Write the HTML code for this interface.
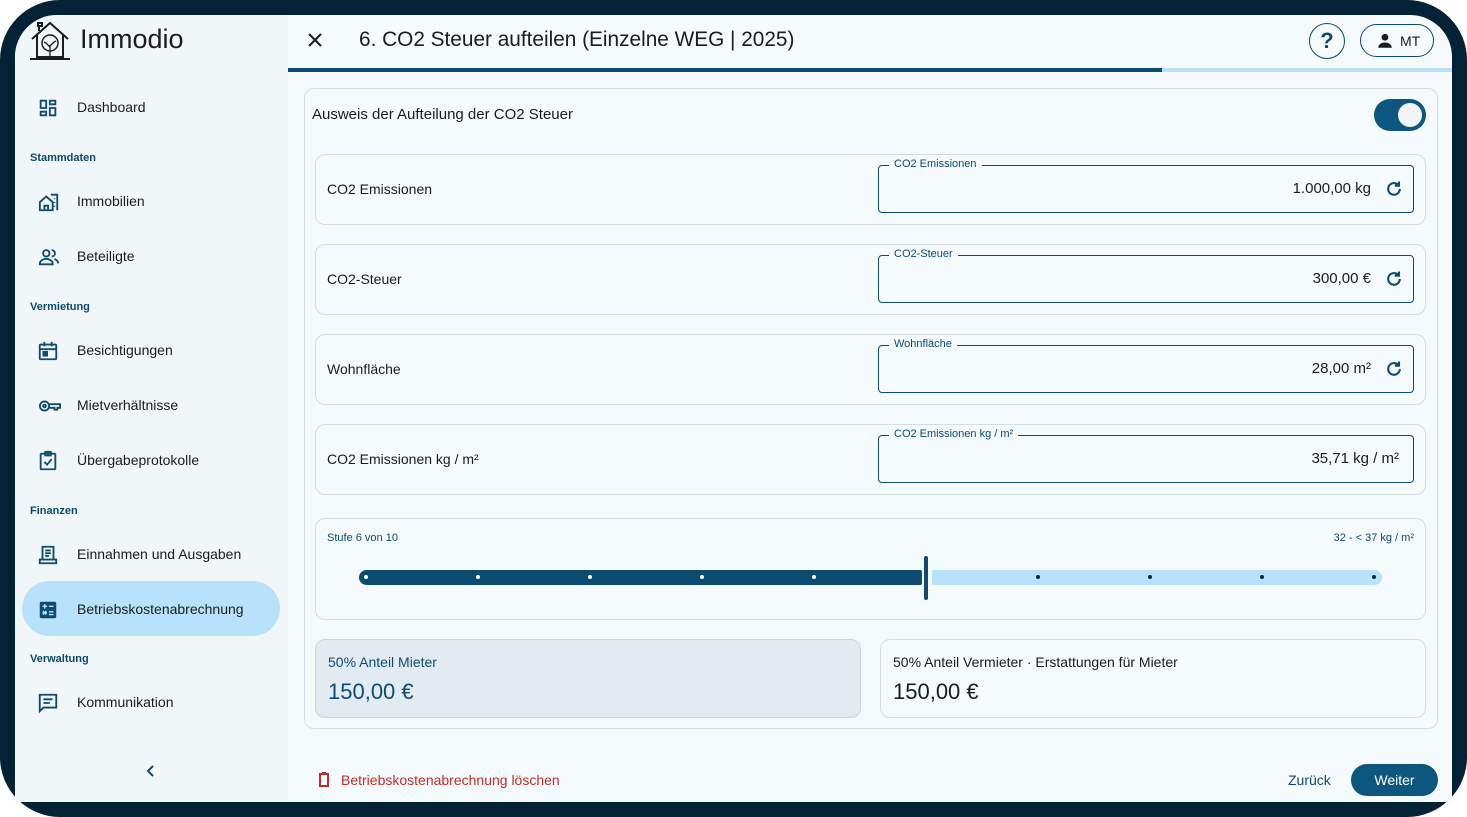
<!DOCTYPE html>
<html><head><meta charset="utf-8"><style>
*{box-sizing:border-box;margin:0;padding:0}
body{width:1467px;height:817px;background:#fff;font-family:"Liberation Sans",sans-serif;overflow:hidden;position:relative;color:#1a1c1e}
.frame{position:absolute;left:0;top:0;width:1467px;height:817px;background:#032236;border-radius:60px}
.screen{position:absolute;left:15px;top:15px;width:1437px;height:787px;background:#f5fafd;border-radius:42px 42px 0 0;overflow:hidden}
.side{position:absolute;left:0;top:0;width:273px;height:787px;background:#f1f6f9}
.abs{position:absolute}
.nav{position:absolute;left:22px;font-size:14px;color:#1a1c1e}
.nav svg{position:absolute;left:0;top:-2px}
.nav span{position:absolute;left:40px;top:0;white-space:nowrap}
.sec{position:absolute;left:15px;font-size:11px;font-weight:bold;color:#0b4a6e}
.card{position:absolute;border:1px solid #d3dde4;border-radius:10px;background:#f5fafd}
.field{position:absolute;left:562px;top:10px;width:536px;height:48px;border:1px solid #0d4c70;border-radius:4px}
.field .lb{position:absolute;left:10px;top:-8px;background:#f5fafd;padding:0 5px;font-size:11px;color:#0d4c70}
.field .v{position:absolute;right:42px;top:14px;font-size:15px}
.rowl{position:absolute;left:11px;top:26px;font-size:14px}
</style></head><body>
<div class="frame"></div>
<div class="screen">
 <div class="side">
  <svg class="abs" style="left:14px;top:4px" width="42" height="42" viewBox="0 0 42 42" fill="none" stroke="#1a1c1e" stroke-width="2"><path d="M3 20 L21 4 L39 20"/><path d="M8 16 V38 H34 V16"/><path d="M10 6 V12"/><rect x="9" y="4" width="4" height="3"/><circle cx="21" cy="24" r="8" stroke-width="1.5"/><path d="M21 38V26M21 28l-4-4M21 27l4-4M17 24l-2-1M25 23l2-1" stroke-width="1.3"/><path d="M1 40 H41"/></svg>
  <div class="abs" style="left:65px;top:9px;font-size:27px;color:#1a1c1e">Immodio</div>
  <div class="nav" style="top:84px"><svg width="22" height="22" viewBox="0 0 24 24" fill="#0d4c70"><path d="M3 3h8v10H3zM5 5v6h4V5zM13 3h8v6h-8zm2 2v2h4V5zM13 11h8v10h-8zm2 2v6h4v-6zM3 15h8v6H3zm2 2v2h4v-2z"/></svg><span>Dashboard</span></div>
  <div class="sec" style="top:137px">Stammdaten</div>
  <div class="nav" style="top:178px"><svg width="24" height="22" viewBox="0 0 24 24" fill="none" stroke="#0d4c70" stroke-width="2"><path d="M2 21V12l7-6 7 6v9H2zM7 21v-5h4v5"/><path d="M14 4h7v17"/><path d="M18 8v1M18 12v1M18 16v1"/></svg><span>Immobilien</span></div>
  <div class="nav" style="top:233px"><svg width="24" height="22" viewBox="0 0 24 24" fill="#0d4c70"><circle cx="9" cy="8" r="3.5" fill="none" stroke="#0d4c70" stroke-width="2"/><path d="M2 19c0-3 4-5 7-5s7 2 7 5v1H2z" fill="none" stroke="#0d4c70" stroke-width="2"/><path d="M15 4.5a3.5 3.5 0 010 7M18 14c2 1 4 2.5 4 5"  fill="none" stroke="#0d4c70" stroke-width="2"/></svg><span>Beteiligte</span></div>
  <div class="sec" style="top:286px">Vermietung</div>
  <div class="nav" style="top:327px"><svg width="22" height="22" viewBox="0 0 24 24" fill="none" stroke="#0d4c70" stroke-width="2"><rect x="3" y="5" width="18" height="16" rx="1"/><path d="M3 10h18M8 2v5M16 2v5"/><rect x="7" y="13" width="4" height="4" fill="#0d4c70"/></svg><span>Besichtigungen</span></div>
  <div class="nav" style="top:382px"><svg width="26" height="22" viewBox="0 0 26 24" fill="none" stroke="#0d4c70" stroke-width="2"><circle cx="7" cy="12" r="5"/><circle cx="7" cy="12" r="1.5"/><path d="M12 10h12v4h-3v2h-3v-2h-6"/></svg><span>Mietverhältnisse</span></div>
  <div class="nav" style="top:437px"><svg width="22" height="22" viewBox="0 0 24 24" fill="none" stroke="#0d4c70" stroke-width="2"><rect x="4" y="4" width="16" height="17" rx="1"/><path d="M9 2h6v4H9z"/><path d="M8 13l3 3 5-6"/></svg><span>Übergabeprotokolle</span></div>
  <div class="sec" style="top:490px">Finanzen</div>
  <div class="nav" style="top:531px"><svg width="22" height="22" viewBox="0 0 24 24" fill="none" stroke="#0d4c70" stroke-width="2"><path d="M6 3h12v14H6zM3 17h18v4H3z"/><path d="M9 7h6M9 10h6M9 13h4"/></svg><span>Einnahmen und Ausgaben</span></div>
  <div class="abs" style="left:7px;top:566px;width:258px;height:55px;background:#b8e2fb;border-radius:28px"></div>
  <div class="nav" style="top:586px"><svg width="22" height="22" viewBox="0 0 24 24" fill="#0d4c70"><rect x="3" y="3" width="18" height="18" rx="2"/><path d="M6 8h5M8.5 5.5v5M13 8h5M6 15h5M13 14h5M13 17h5M6.5 13l3.5 4M10 13l-3.5 4" stroke="#b8e2fb" stroke-width="1.5"/></svg><span>Betriebskostenabrechnung</span></div>
  <div class="sec" style="top:638px">Verwaltung</div>
  <div class="nav" style="top:679px"><svg width="22" height="22" viewBox="0 0 24 24" fill="none" stroke="#0d4c70" stroke-width="2"><path d="M3 3h18v14H7l-4 4z"/><path d="M7 8h10M7 12h7"/></svg><span>Kommunikation</span></div>
  <svg class="abs" style="left:129px;top:748px" width="14" height="16" viewBox="0 0 14 16" fill="none" stroke="#0d4c70" stroke-width="2"><path d="M9 3L4 8l5 5"/></svg>
 </div>
 <svg class="abs" style="left:293px;top:18px" width="14" height="14" viewBox="0 0 14 14" stroke="#1a1c1e" stroke-width="2"><path d="M1 1l12 12M13 1L1 13"/></svg>
 <div class="abs" style="left:344px;top:13px;font-size:20.8px">6. CO2 Steuer aufteilen (Einzelne WEG | 2025)</div>
 <div class="abs" style="left:1294px;top:8px;width:36px;height:36px;border:1.5px solid #0d4c70;border-radius:50%;text-align:center;line-height:34px;font-size:22px;font-weight:bold;color:#0d4c70">?</div>
 <div class="abs" style="left:1345px;top:9px;width:74px;height:33px;border:1.5px solid #0d4c70;border-radius:17px"><svg class="abs" style="left:15px;top:7px" width="18" height="18" viewBox="0 0 24 24" fill="#1a1c1e"><circle cx="12" cy="7" r="4.5"/><path d="M3 21c0-5 5-7 9-7s9 2 9 7z"/></svg><span class="abs" style="left:39px;top:8px;font-size:14px">MT</span></div>
 <div class="abs" style="left:273px;top:53px;width:1164px;height:4px;background:#b8e2fb"></div>
 <div class="abs" style="left:273px;top:53px;width:874px;height:4px;background:#0d4c70"></div>
 <div class="card" style="left:289px;top:73px;width:1134px;height:641px"></div>
 <div class="abs" style="left:297px;top:91px;font-size:15px">Ausweis der Aufteilung der CO2 Steuer</div>
 <div class="abs" style="left:1359px;top:84px;width:52px;height:32px;background:#0d567f;border-radius:16px"><div class="abs" style="left:24px;top:4px;width:24px;height:24px;border-radius:50%;background:#f1f5f8"></div></div>
 <div class="card" style="left:300px;top:139px;width:1111px;height:71px"><div class="rowl">CO2 Emissionen</div><div class="field"><div class="lb">CO2 Emissionen</div><div class="v">1.000,00 kg</div><svg class="abs" style="right:9px;top:13px" width="20" height="20" viewBox="0 0 24 24" fill="none" stroke="#0d4c70" stroke-width="2.5"><path d="M19 12a7 7 0 11-2-5"/><path d="M18 3v5h-5" fill="#0d4c70"/></svg></div></div>
 <div class="card" style="left:300px;top:229px;width:1111px;height:71px"><div class="rowl">CO2-Steuer</div><div class="field"><div class="lb">CO2-Steuer</div><div class="v">300,00 €</div><svg class="abs" style="right:9px;top:13px" width="20" height="20" viewBox="0 0 24 24" fill="none" stroke="#0d4c70" stroke-width="2.5"><path d="M19 12a7 7 0 11-2-5"/><path d="M18 3v5h-5" fill="#0d4c70"/></svg></div></div>
 <div class="card" style="left:300px;top:319px;width:1111px;height:71px"><div class="rowl">Wohnfläche</div><div class="field"><div class="lb">Wohnfläche</div><div class="v">28,00 m²</div><svg class="abs" style="right:9px;top:13px" width="20" height="20" viewBox="0 0 24 24" fill="none" stroke="#0d4c70" stroke-width="2.5"><path d="M19 12a7 7 0 11-2-5"/><path d="M18 3v5h-5" fill="#0d4c70"/></svg></div></div>
 <div class="card" style="left:300px;top:409px;width:1111px;height:71px"><div class="rowl">CO2 Emissionen kg / m²</div><div class="field"><div class="lb">CO2 Emissionen kg / m²</div><div class="v" style="right:14px">35,71 kg / m²</div></div></div>
 <div class="card" style="left:300px;top:503px;width:1111px;height:102px">
  <div class="abs" style="left:11px;top:13px;font-size:11px;color:#0d4c70">Stufe 6 von 10</div>
  <div class="abs" style="right:11px;top:13px;font-size:11px;color:#0d4c70">32 - &lt; 37 kg / m²</div>
  <div class="abs" style="left:43px;top:51px;width:563px;height:15px;background:#0d4c70;border-radius:8px 2px 2px 8px"></div>
  <div class="abs" style="left:616px;top:51px;width:450px;height:15px;background:#b8e2fb;border-radius:2px 8px 8px 2px"></div>
  <div class="abs" style="left:608px;top:37px;width:4px;height:44px;background:#0d4c70;border-radius:2px"></div>
  <svg class="abs" style="left:0;top:0" width="1111" height="102"><g fill="#fff"><circle cx="50" cy="58" r="2"/><circle cx="162" cy="58" r="2"/><circle cx="274" cy="58" r="2"/><circle cx="386" cy="58" r="2"/><circle cx="498" cy="58" r="2"/></g><g fill="#0d2a3c"><circle cx="722" cy="58" r="2"/><circle cx="834" cy="58" r="2"/><circle cx="946" cy="58" r="2"/><circle cx="1058" cy="58" r="2"/></g></svg>
 </div>
 <div class="card" style="left:300px;top:624px;width:546px;height:79px;background:#e1ebf1;border-color:#c9d6de"><div class="abs" style="left:12px;top:14px;font-size:14px;color:#0d4c70">50% Anteil Mieter</div><div class="abs" style="left:12px;top:39px;font-size:22px;color:#0d4c70">150,00 €</div></div>
 <div class="card" style="left:865px;top:624px;width:546px;height:79px"><div class="abs" style="left:12px;top:14px;font-size:14px">50% Anteil Vermieter · Erstattungen für Mieter</div><div class="abs" style="left:12px;top:39px;font-size:22px">150,00 €</div></div>
 <svg class="abs" style="left:303px;top:757px" width="12" height="15" viewBox="0 0 12 15" fill="none" stroke="#c42b2b" stroke-width="2"><path d="M1 2h10M4 1h4M2 3v11h8V3"/></svg>
 <div class="abs" style="left:326px;top:757px;font-size:14px;color:#c42b2b">Betriebskostenabrechnung löschen</div>
 <div class="abs" style="left:1273px;top:757px;font-size:14px;color:#0d4c70">Zurück</div>
 <div class="abs" style="left:1336px;top:749px;width:87px;height:32px;background:#0d567f;border-radius:16px;color:#fff;font-size:14px;text-align:center;line-height:32px">Weiter</div>
</div>
</body></html>
